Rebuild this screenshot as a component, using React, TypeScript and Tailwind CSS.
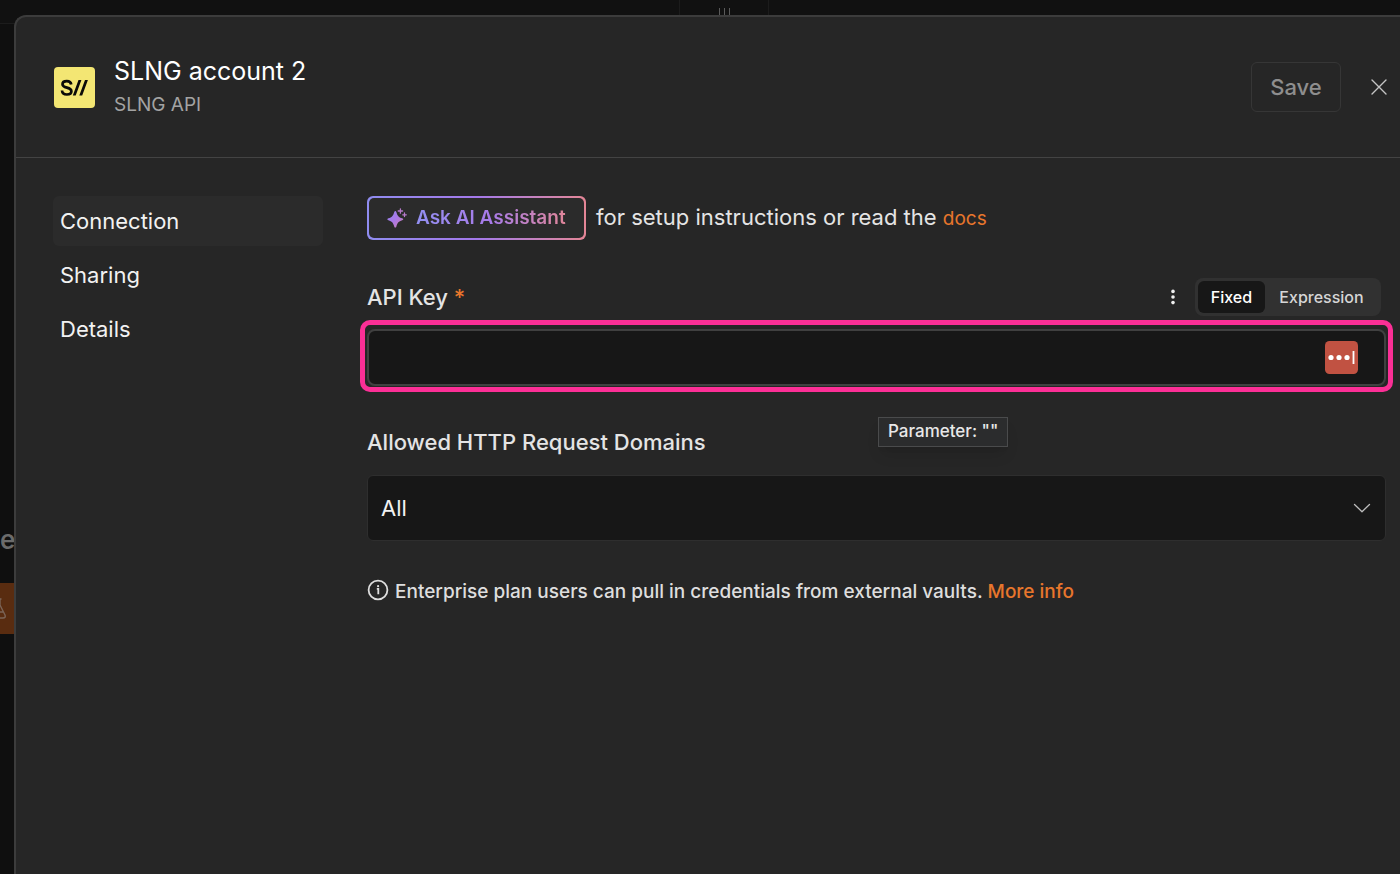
import React from 'react';

function Backdrop() {
  return (
    <div aria-hidden="true" className="absolute inset-0 overflow-hidden bg-[#0f0f0f]">
      <div className="flex h-6 justify-center border-b border-[#1c1c1c] bg-[#111111] pl-12">
        <div className="flex w-[90px] items-start justify-center gap-1 border-x border-[#1c1c1c] pt-2">
          <span className="h-4 w-px bg-[#5a5a5a]" />
          <span className="h-4 w-px bg-[#5a5a5a]" />
          <span className="h-4 w-px bg-[#5a5a5a]" />
        </div>
      </div>
      <div className="absolute top-[524px] left-0 text-[26px] leading-8 font-semibold text-[#6b6b6b]">e</div>
      <div className="absolute top-[583px] left-0 h-[51px] w-4 overflow-hidden bg-[#592c10]">
        <svg viewBox="0 0 16 51" className="h-[51px] w-4" fill="none" stroke="#7b6457" strokeWidth="1.4" strokeLinecap="round" strokeLinejoin="round">
          <path d="M-5 16H1M0 16V22L5 32Q6 35 3 35H-7M-3 29H3" />
        </svg>
      </div>
    </div>
  );
}

function Header() {
  return (
    <header className="flex h-[141px] items-center border-b border-[#434343] pr-[11px] pl-[38px]">
      <svg viewBox="0 0 41 41" className="mr-[19px] size-[41px]" role="img" aria-label="SLNG">
        <rect width="41" height="41" rx="4" fill="#f3e673" />
        <path d="M17.2 17.5C16.9 14.9 15 14.1 12.8 14.1C10.2 14.1 8.5 15.3 8.5 17.2C8.5 21.8 17.4 19.5 17.4 24.2C17.4 26.2 15.5 27.5 12.9 27.5C10 27.5 8.2 26.2 8 23.5" fill="none" stroke="#0b0b08" strokeWidth="2.7" />
        <path d="M24.5 13H27.4L21.7 28.5H18.8ZM31 13H33.9L28.2 28.5H25.3Z" fill="#0b0b08" />
      </svg>
      <div className="flex-1">
        <h1 className="text-[25px] leading-9 text-white">SLNG account 2</h1>
        <p className="text-[19px] leading-8 text-[#a3a3a3]">SLNG API</p>
      </div>
      <button type="button" className="h-[50px] w-[90px] rounded-md border border-[#363636] text-[22px] font-medium text-[#8e8e8e]">
        Save
      </button>
      <button type="button" aria-label="Close" className="ml-7 flex size-5 items-center justify-center">
        <svg viewBox="0 0 20 20" className="size-5" stroke="#c4c4c4" strokeWidth="1.4" strokeLinecap="round">
          <path d="M3 3L17 17M17 3L3 17" />
        </svg>
      </button>
    </header>
  );
}

function Sidebar() {
  const item = 'flex h-[50px] items-center rounded-md px-[7px] text-[22px] text-[#f2f2f2]';
  return (
    <nav className="flex w-[270px] shrink-0 flex-col gap-1">
      <a href="#connection" aria-current="page" className={item + ' bg-[#2b2b2b]'}>Connection</a>
      <a href="#sharing" className={item}>Sharing</a>
      <a href="#details" className={item}>Details</a>
    </nav>
  );
}

function AssistantRow() {
  return (
    <div className="flex h-11 items-center">
      <div className="rounded-md bg-linear-to-r from-[#8f8cf0] via-[#a378ea] to-[#e48595] p-[2px]">
        <button type="button" className="flex h-10 w-[215px] items-center rounded-[5px] bg-[#2b2b2b] pl-[18px]">
          <svg viewBox="0 0 20 20" className="mr-[9px] size-5">
            <defs>
              <linearGradient id="spark" x1="0" y1="0" x2="1" y2="1">
                <stop offset="0" stopColor="#9186f0" />
                <stop offset="0.5" stopColor="#aa78e6" />
                <stop offset="1" stopColor="#d07fb0" />
              </linearGradient>
            </defs>
            <path d="M8.3 3Q9 3 9.4 4.2C10.6 8.1 11.6 9.1 15.2 10.3Q16.3 10.7 16.3 11.3T15.2 12.3C11.6 13.5 10.6 14.5 9.4 18.4Q9 19.6 8.3 19.6T7.2 18.4C6 14.5 5 13.5 1.4 12.3Q0.3 11.9 0.3 11.3T1.4 10.3C5 9.1 6 8.1 7.2 4.2Q7.6 3 8.3 3Z" fill="url(#spark)" />
            <path d="M13.4 0.8V5.2M11.2 3H15.6M17.5 5V8.6M15.7 6.8H19.3" fill="none" stroke="#b77acb" strokeWidth="1.3" strokeLinecap="round" />
          </svg>
          <span className="bg-linear-to-r from-[#9290f2] via-[#a87ae8] to-[#e08598] bg-clip-text text-[19px] font-semibold text-transparent">
            Ask AI Assistant
          </span>
        </button>
      </div>
      <p className="ml-[10px] pb-[2px] text-[22px] text-[#e4e4e4]">
        for setup instructions or read the{' '}
        <a href="#docs" className="text-[19px] text-[#e8762c]">docs</a>
      </p>
    </div>
  );
}

function ApiKeyField() {
  return (
    <div className="mt-[38px]">
      <div className="flex h-[38px] items-center pr-[5px]">
        <label htmlFor="api-key" className="flex-1 text-[22px] font-medium text-[#e4e4e4]">
          API Key <span className="text-[#e8762c]">*</span>
        </label>
        <button type="button" aria-label="Parameter options" className="mr-[12px] flex h-6 w-5 items-center justify-center">
          <svg viewBox="0 0 4 16" className="h-4 w-1" fill="#f0f0f0">
            <circle cx="2" cy="2.4" r="1.8" />
            <circle cx="2" cy="8" r="1.8" />
            <circle cx="2" cy="13.6" r="1.8" />
          </svg>
        </button>
        <div role="group" aria-label="Value mode" className="flex h-[38px] items-center rounded-lg bg-[#313131] px-[3px] text-[16px] font-medium">
          <button type="button" aria-pressed="true" className="h-8 w-[67px] rounded-md bg-[#171717] text-white">Fixed</button>
          <button type="button" aria-pressed="false" className="h-8 w-[113px] rounded-md text-[#d6d6d6]">Expression</button>
        </div>
      </div>
      <div className="-mx-[7px] mt-1 rounded-[10px] border-5 border-[#fb2f96] px-[2px] pt-1 pb-px">
        <div className="flex h-[57px] items-center rounded-lg border-2 border-[#404040] bg-[#171717] pr-[26px]">
          <input id="api-key" type="password" className="h-full min-w-0 flex-1 bg-transparent px-3 text-[22px] text-white outline-none" />
          <button type="button" aria-label="Fill password" className="size-[33px]">
            <svg viewBox="0 0 33 33" className="size-[33px]">
              <rect width="33" height="33" rx="4.5" fill="#c15242" />
              <g fill="#ffffff">
                <circle cx="6" cy="16.5" r="2.6" />
                <circle cx="14" cy="16.5" r="2.6" />
                <circle cx="22" cy="16.5" r="2.6" />
                <rect x="27.6" y="10" width="1.8" height="13" />
              </g>
            </svg>
          </button>
        </div>
      </div>
    </div>
  );
}

function DomainsField() {
  return (
    <div className="relative mt-[34px]">
      <label htmlFor="domains" className="block text-[22px] leading-8 font-medium text-[#e4e4e4]">Allowed HTTP Request Domains</label>
      <div role="tooltip" className="absolute -top-[9px] left-[511px] flex h-[30px] items-center border border-[#4a4b4c] bg-[#2b2c2d] px-[9px] text-[17px] font-medium text-[#e8e8e8] shadow-lg">
        Parameter: ""
      </div>
      <div className="mt-[17px] grid items-center">
        <select id="domains" className="col-start-1 row-start-1 h-[66px] w-full appearance-none rounded-md border border-[#2e2e2e] bg-[#171717] px-[13px] text-[22px] text-[#f2f2f2]">
          <option>All</option>
        </select>
        <svg viewBox="0 0 18 10" className="pointer-events-none col-start-1 row-start-1 mr-[15px] h-[10px] w-[18px] justify-self-end" fill="none" stroke="#bdbdbd" strokeWidth="1.3" strokeLinecap="round" strokeLinejoin="round">
          <path d="M1.5 1.5L9 8.7L16.5 1.5" />
        </svg>
      </div>
    </div>
  );
}

function VaultNote() {
  return (
    <p className="mt-9 flex items-center text-[19px] leading-[30px] font-medium text-[#dedede]">
      <svg viewBox="0 0 22 22" className="mr-[6px] mb-1 size-[22px]" fill="none" stroke="#dedede">
        <circle cx="11" cy="11" r="9.4" strokeWidth="1.8" />
        <path d="M9.8 9.9H11.3V15.2" strokeWidth="1.8" />
        <circle cx="11.1" cy="7.2" r="1.1" fill="#dedede" stroke="none" />
      </svg>
      <span>
        Enterprise plan users can pull in credentials from external vaults.{' '}
        <a href="#more-info" className="text-[#e8762c]">More info</a>
      </span>
    </p>
  );
}

export default function App() {
  return (
    <div className="relative flex min-h-screen flex-col overflow-hidden pt-[15px] pl-[14px] font-['Inter',sans-serif]">
      <Backdrop />
      <div role="dialog" aria-label="SLNG account 2" className="relative flex-1 rounded-tl-xl border-t-2 border-l-2 border-[#3c3c3c] bg-[#262626]">
        <Header />
        <div className="flex gap-11 pt-[38px] pr-[14px] pl-[37px]">
          <Sidebar />
          <main className="min-w-0 flex-1">
            <AssistantRow />
            <ApiKeyField />
            <DomainsField />
            <VaultNote />
          </main>
        </div>
      </div>
    </div>
  );
}
